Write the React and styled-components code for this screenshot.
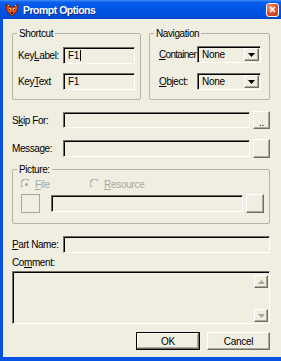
import React from 'react';
import styled, { createGlobalStyle } from 'styled-components';

const Global = createGlobalStyle`
  html, body {
    margin: 0;
    padding: 0;
    background: #F0EEE1;
  }
  body {
    font-family: "Liberation Sans", Arial, sans-serif;
    font-size: 10px;
    color: #000;
  }
`

const Window = styled.div`
  width: 281px;
  height: 361px;
  display: flex;
  flex-direction: column;
  overflow: hidden;
`

const TitleBar = styled.div`
  height: 19px;
  flex: none;
  display: flex;
  align-items: center;
  gap: 4px;
  padding: 0 2px 0 5px;
  background: linear-gradient(to bottom, #3D8BFB 0%, #0A5EEC 12%, #0055E5 45%, #0050DF 80%, #0046C8 100%);
`

const Title = styled.div`
  flex: 1;
  color: #fff;
  font-weight: bold;
  font-size: 10.5px;
  letter-spacing: -0.5px;
  text-shadow: 1px 1px 0 #0A2A8F;
  white-space: nowrap;
`

const CloseBtn = styled.div`
  width: 13px;
  height: 14px;
  box-sizing: border-box;
  border: 1px solid #fff;
  border-radius: 3px;
  background: radial-gradient(circle at 35% 30%, #F2A488 0%, #E0552D 45%, #C23B17 100%);
  display: flex;
  align-items: center;
  justify-content: center;
`

const Frame = styled.div`
  flex: 1;
  display: flex;
  border-left: 3px solid #0553E0;
  border-bottom: 4px solid #0553E0;
`

const Body = styled.div`
  flex: 1;
  display: flex;
  flex-direction: column;
  padding: 14px 11px 0 9px;
  background: #F0EEE1;
`

const Row = styled.div`
  display: flex;
  align-items: ${p => p.align || 'center'};
  gap: ${p => p.gap || 0}px;
  height: ${p => p.h || 17}px;
  margin-top: ${p => p.mt || 0}px;
  justify-content: ${p => p.justify || 'flex-start'};
`

const Group = styled.div`
  position: relative;
  box-sizing: border-box;
  width: ${p => (p.w ? `${p.w}px` : 'auto')};
  height: ${p => p.h}px;
  margin-top: ${p => p.mt || 0}px;
  border: 1px solid #B7B4A6;
  border-radius: 2px;
  padding: ${p => p.pad};
  display: flex;
  flex-direction: column;
  gap: ${p => p.gap || 0}px;
`

const Legend = styled.span`
  position: absolute;
  top: -6px;
  left: 4px;
  padding: 0 2px;
  line-height: 11px;
  background: #F0EEE1;
  letter-spacing: -0.4px;
`

const Label = styled.span`
  width: ${p => p.w}px;
  flex: none;
  white-space: nowrap;
  letter-spacing: ${p => p.ls || -0.4}px;
  color: ${p => (p.disabled ? '#ACA899' : '#000')};
`

const Field = styled.div`
  box-sizing: border-box;
  height: ${p => p.h || 17}px;
  width: ${p => (p.w ? `${p.w}px` : 'auto')};
  flex: ${p => (p.w ? 'none' : 1)};
  border-top: 1px solid #716F64;
  border-left: 1px solid #716F64;
  border-right: 1px solid #fff;
  border-bottom: 1px solid #fff;
  box-shadow: inset 1px 1px 0 #000;
  display: flex;
  align-items: center;
  padding: 0 2px 0 4px;
  letter-spacing: -0.3px;
`

const Caret = styled.span`
  display: inline-block;
  width: 1px;
  height: 11px;
  background: #000;
  margin-left: 1px;
`

const Button = styled.div`
  box-sizing: border-box;
  width: ${p => p.w}px;
  height: ${p => p.h}px;
  flex: none;
  border-top: 1px solid ${p => (p.default ? '#000' : '#fff')};
  border-left: 1px solid ${p => (p.default ? '#000' : '#fff')};
  border-right: 1px solid ${p => (p.default ? '#000' : '#716F64')};
  border-bottom: 1px solid ${p => (p.default ? '#000' : '#716F64')};
  box-shadow: ${p => (p.default
    ? 'inset -1px -1px 0 #716F64, inset 1px 1px 0 #fff, inset -2px -2px 0 #ACA899'
    : 'inset -1px -1px 0 #ACA899')};
  display: flex;
  align-items: ${p => p.align || 'center'};
  justify-content: center;
  letter-spacing: -0.3px;
`

const Select = styled(Field)`
  padding: 0 1px 0 4px;
  justify-content: space-between;
`

const Arrow = styled.div`
  width: 15px;
  height: 13px;
  box-sizing: border-box;
  border-top: 1px solid #fff;
  border-left: 1px solid #fff;
  border-right: 1px solid #716F64;
  border-bottom: 1px solid #716F64;
  box-shadow: inset -1px -1px 0 #ACA899;
  display: flex;
  align-items: center;
  justify-content: center;
`

const Radio = styled.span`
  display: flex;
  align-items: center;
  gap: 3px;
  color: #ACA899;
  letter-spacing: -0.3px;
  width: ${p => (p.w ? `${p.w}px` : 'auto')};
`

const Swatch = styled.div`
  width: 19px;
  height: 19px;
  box-sizing: border-box;
  border: 1px solid #ACA899;
  flex: none;
`

const TextArea = styled(Field)`
  height: 53px;
  flex: none;
  margin-top: 2px;
  align-items: stretch;
  justify-content: flex-end;
  padding: 3px 1px 1px 0;
`

const ScrollCol = styled.div`
  display: flex;
  flex-direction: column;
  justify-content: space-between;
`

const ScrollBtn = styled(Arrow)`
  width: 14px;
  height: 13px;
`

const CommentLabel = styled.div`
  margin-top: 4px;
  height: 12px;
  line-height: 12px;
  letter-spacing: -0.4px;
`

const U = styled.span`
  text-decoration: underline;
`

const FoxIcon = () => (
  <svg width="14" height="14" viewBox="0 0 14 14">
    <path d="M1 1 L5 4 L9 4 L13 1 L12 8 L7 13 L2 8 Z" fill="#E4561A" stroke="#7A1804" strokeWidth="1" />
    <rect x="4" y="5" width="2" height="2" fill="#F4C030" />
    <rect x="8" y="5" width="2" height="2" fill="#F4C030" />
    <rect x="4" y="6" width="1" height="1" fill="#000" />
    <rect x="9" y="6" width="1" height="1" fill="#000" />
    <rect x="6" y="9" width="2" height="2" fill="#3A0A00" />
    <rect x="3" y="2" width="1" height="1" fill="#F4C030" />
    <rect x="10" y="2" width="1" height="1" fill="#F4C030" />
  </svg>
)

const Down = ({ color = '#000' }) => (
  <svg width="7" height="4" viewBox="0 0 7 4">
    <path d="M0 0 H7 L3.5 4 Z" fill={color} />
  </svg>
)

const Up = ({ color = '#ACA899' }) => (
  <svg width="7" height="4" viewBox="0 0 7 4">
    <path d="M0 4 H7 L3.5 0 Z" fill={color} />
  </svg>
)

const RadioDot = ({ checked }) => (
  <svg width="11" height="11" viewBox="0 0 11 11">
    <path d="M1.5 8 A4.5 4.5 0 0 1 8 1.5" fill="none" stroke="#ACA899" strokeWidth="1.3" />
    {checked && <circle cx="5.5" cy="5.5" r="1.6" fill="#ACA899" />}
  </svg>
)

export default function App() {
  return (
    <>
      <Global />
      <Window>
        <TitleBar>
          <FoxIcon />
          <Title>Prompt Options</Title>
          <CloseBtn>
            <svg width="7" height="7" viewBox="0 0 7 7">
              <path d="M1 1 L6 6 M6 1 L1 6" stroke="#fff" strokeWidth="1.6" />
            </svg>
          </CloseBtn>
        </TitleBar>
        <Frame>
          <Body>
            <Row h={67} gap={8} align="stretch">
              <Group w={129} h={67} pad="13px 5px 0 5px" gap={9}>
                <Legend>Shortcut</Legend>
                <Row>
                  <Label w={45}>Key<U>L</U>abel:</Label>
                  <Field w={72}>F1<Caret /></Field>
                </Row>
                <Row>
                  <Label w={45}>Key<U>T</U>ext</Label>
                  <Field w={72}>F1</Field>
                </Row>
              </Group>
              <Group w={121} h={67} pad="12px 8px 0 9px" gap={10}>
                <Legend>Navigation</Legend>
                <Row>
                  <Label w={38} ls={-0.7}><U>C</U>ontainer</Label>
                  <Select w={64}>None<Arrow><Down /></Arrow></Select>
                </Row>
                <Row>
                  <Label w={38}><U>O</U>bject:</Label>
                  <Select w={64}>None<Arrow><Down /></Arrow></Select>
                </Row>
              </Group>
            </Row>

            <Row h={18} mt={11} gap={3}>
              <Label w={48}>S<U>k</U>ip For:</Label>
              <Field h={16} />
              <Button w={17} h={18} align="flex-end">..</Button>
            </Row>
            <Row h={19} mt={10} gap={3}>
              <Label w={48}>Message:</Label>
              <Field h={17} />
              <Button w={17} h={19} />
            </Row>

            <Group h={55} mt={11} pad="9px 5px 0 8px" gap={4}>
              <Legend>Picture:</Legend>
              <Row h={11}>
                <Radio w={69}><RadioDot checked /><span><U>F</U>ile</span></Radio>
                <Radio><RadioDot /><span><U>R</U>esource</span></Radio>
              </Row>
              <Row h={19} gap={11}>
                <Swatch />
                <Field h={17} />
                <Button w={18} h={19} style={{ marginLeft: -8 }} />
              </Row>
            </Group>

            <Row h={17} mt={12}>
              <Label w={51}><U>P</U>art Name:</Label>
              <Field h={17} />
            </Row>
            <CommentLabel>Co<U>m</U>ment:</CommentLabel>
            <TextArea>
              <ScrollCol>
                <ScrollBtn><Up /></ScrollBtn>
                <ScrollBtn><Down color="#ACA899" /></ScrollBtn>
              </ScrollCol>
            </TextArea>

            <Row h={18} mt={8} gap={7} justify="flex-end">
              <Button w={64} h={18} default>OK</Button>
              <Button w={63} h={18}>Cancel</Button>
            </Row>
          </Body>
        </Frame>
      </Window>
    </>
  );
}
